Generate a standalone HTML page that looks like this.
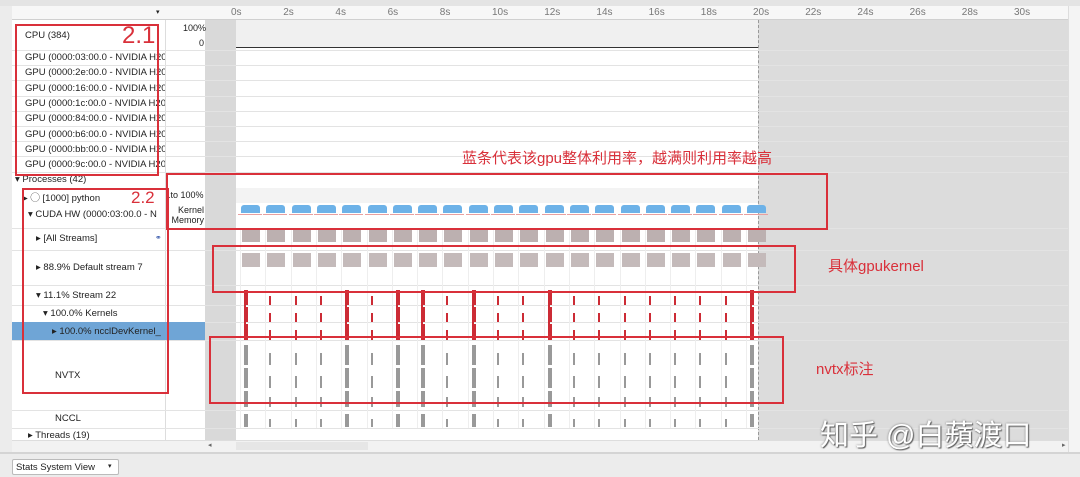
<!DOCTYPE html>
<html><head><meta charset="utf-8"><style>
*{margin:0;padding:0;box-sizing:border-box}
body{width:1080px;height:477px;overflow:hidden;background:#ececec;font-family:"Liberation Sans","Noto Sans CJK SC",sans-serif;font-size:10px;color:#222;position:relative}
.a{position:absolute}
.t{position:absolute;white-space:nowrap;font-size:9.5px}
.rb{position:absolute;border:2px solid #d9303a}
.hl{position:absolute;left:12px;width:1056px;height:1px;background:#e3e3e3}
.red{color:#d9303a;font-family:"Liberation Sans","Noto Sans CJK SC",sans-serif;position:absolute;white-space:nowrap}
</style></head><body>
<div class="a" style="left:0;top:0;width:1080px;height:6px;background:#e4e4e4"></div>
<div class="a" style="left:12px;top:6px;width:153px;height:434px;background:#fff"></div>
<div class="a" style="left:165px;top:6px;width:40px;height:434px;background:#fff;border-left:1px solid #ddd"></div>
<div class="a" style="left:205px;top:6px;width:31px;height:434px;background:#d9d9d9"></div>
<div class="a" style="left:236px;top:20px;width:522px;height:420px;background:#fff"></div>
<div class="a" style="left:236px;top:20px;width:522px;height:28px;background:#f0f0f0"></div>
<div class="a" style="left:236px;top:188px;width:522px;height:15px;background:#f3f3f3"></div>
<div class="a" style="left:758px;top:20px;width:310px;height:420px;background:#dcdcdc"></div>
<div class="a" style="left:758px;top:20px;width:0;height:420px;border-left:1px dashed #999"></div>
<div class="a" style="left:1068px;top:6px;width:12px;height:446px;background:#f4f4f4;border-left:1px solid #ddd"></div>
<div class="a" style="left:12px;top:6px;width:1056px;height:14px;background:#f7f7f7;border-bottom:1px solid #d0d0d0"></div>
<div class="t" style="left:156px;top:8px;font-size:7px">▾</div>
<div id="ticks"></div>
<div class="a" style="left:236px;top:47px;width:522px;height:1px;background:#333"></div>
<div class="hl" style="top:50px"></div><div class="hl" style="top:65px"></div><div class="hl" style="top:80px"></div><div class="hl" style="top:96px"></div><div class="hl" style="top:111px"></div><div class="hl" style="top:126px"></div><div class="hl" style="top:141px"></div><div class="hl" style="top:156px"></div><div class="hl" style="top:172px"></div><div class="hl" style="top:228px"></div><div class="hl" style="top:250px"></div><div class="hl" style="top:285px"></div><div class="hl" style="top:305px"></div><div class="hl" style="top:322px"></div><div class="hl" style="top:340px"></div><div class="hl" style="top:410px"></div><div class="hl" style="top:428px"></div>
<div class="a" style="left:12px;top:322px;width:193px;height:18px;background:#6fa5d6"></div>
<div class="t" style="left:25px;top:30px">CPU (384)</div>
<div class="t" style="left:183px;top:23px;font-size:9px">100%</div>
<div class="t" style="left:199px;top:38px;font-size:9px">0</div>
<div id="gpus"></div>
<div class="t" style="left:15px;top:174px">▾ Processes (42)</div>
<div class="t" style="left:23px;top:190px">▸ ◯ [1000] python</div>
<div class="t" style="left:168px;top:190px;font-size:9px">.to 100%</div>
<div class="t" style="left:28px;top:209px">▾ CUDA HW (0000:03:00.0 - N</div>
<div class="t" style="left:171px;top:205px;font-size:9px;text-align:right;width:33px;line-height:10px">Kernel<br>Memory</div>
<div class="t" style="left:36px;top:233px">▸ [All Streams]</div>
<div class="t" style="left:155px;top:233px;color:#3355aa;font-size:8px">⚭</div>
<div class="t" style="left:36px;top:262px">▸ 88.9% Default stream 7</div>
<div class="t" style="left:36px;top:290px">▾ 11.1% Stream 22</div>
<div class="t" style="left:43px;top:308px">▾ 100.0% Kernels</div>
<div class="t" style="left:52px;top:326px">▸ 100.0% ncclDevKernel_</div>
<div class="t" style="left:55px;top:370px">NVTX</div>
<div class="t" style="left:55px;top:413px">NCCL</div>
<div class="t" style="left:28px;top:430px">▸ Threads (19)</div>
<div id="bars"></div>
<div class="a" style="left:12px;top:440px;width:1056px;height:12px;background:#f2f2f2;border-top:1px solid #ddd"></div>
<div class="a" style="left:236px;top:442px;width:132px;height:8px;background:#e6e6e6"></div>
<div class="t" style="left:208px;top:441px;font-size:7px;color:#666">◂</div>
<div class="t" style="left:1062px;top:441px;font-size:7px;color:#666">▸</div>
<div class="a" style="left:0;top:452px;width:1080px;height:2px;background:#d4d4d4"></div>
<div class="a" style="left:12px;top:459px;width:107px;height:16px;background:#fff;border:1px solid #bbb;border-radius:2px"></div>
<div class="t" style="left:16px;top:462px">Stats System View</div>
<div class="t" style="left:108px;top:462px;font-size:7px">▾</div>
<div class="rb" style="left:15px;top:24px;width:144px;height:152px"></div>
<div class="red" style="left:122px;top:22px;font-size:24px">2.1</div>
<div class="rb" style="left:22px;top:188px;width:147px;height:206px"></div>
<div class="red" style="left:131px;top:188px;font-size:17px">2.2</div>
<div class="rb" style="left:166px;top:173px;width:662px;height:57px"></div>
<div class="red" style="left:462px;top:147px;font-size:15px">蓝条代表该gpu整体利用率，越满则利用率越高</div>
<div class="rb" style="left:212px;top:245px;width:584px;height:48px"></div>
<div class="red" style="left:828px;top:255px;font-size:15px">具体gpukernel</div>
<div class="rb" style="left:209px;top:336px;width:575px;height:68px"></div>
<div class="red" style="left:816px;top:358px;font-size:15px">nvtx标注</div>
<div class="a" style="left:820px;top:412px;font-size:29px;color:#fff;text-shadow:0 0 2px #777,1px 1px 1px #555;white-space:nowrap;font-family:'Liberation Sans','Noto Sans CJK SC',sans-serif">知乎 @白蘋渡口</div>
<script>
(function(){
var h='';
for(var i=0;i<=30;i+=2){var x=236+i*26.1;h+='<div class="t" style="left:'+(x-5)+'px;top:7px;color:#777;font-size:10px">'+i+'s</div>';}
document.getElementById('ticks').innerHTML=h;
var g=['03','2e','16','1c','84','b6','bb','9c'],s='';
for(var k=0;k<8;k++)s+='<div class="t" style="left:25px;top:'+(52+k*15.3)+'px;width:140px;overflow:hidden">GPU (0000:'+g[k]+':00.0 - NVIDIA H20</div>';
document.getElementById('gpus').innerHTML=s;
var b='';var thick={0:1,4:1,6:1,7:1,9:1,12:1,20:1};
var rows=[[290,305],[307,322],[324,340]],nv=[[345,365],[368,388],[391,407],[414,427]];
for(var j=0;j<21;j++){var x=238+j*25.3;if(x>756)break;
b+='<div class="a" style="left:'+(x+2)+'px;top:228px;width:1px;height:200px;background:#eee"></div>';
b+='<div class="a" style="left:'+(x+3)+'px;top:205px;width:19px;height:8px;background:#6db2e8;border-radius:3px 3px 0 0"></div>';
b+='<div class="a" style="left:'+(x)+'px;top:214px;width:24px;height:1px;background:#e8a0a0"></div>';
b+='<div class="a" style="left:'+(x+4)+'px;top:230px;width:18px;height:12px;background:#bcb0b0"></div>';
b+='<div class="a" style="left:'+(x+4)+'px;top:253px;width:18px;height:14px;background:#c4baba"></div>';
var w=thick[j]?4:2;
for(var r=0;r<3;r++){var t0=rows[r][0],t1=rows[r][1];var tp=thick[j]?t0:t1-(t1-t0)*0.6;
b+='<div class="a" style="left:'+(x+6)+'px;top:'+tp+'px;width:'+w+'px;height:'+(t1-tp)+'px;background:#cc2b35"></div>';}
if(thick[j])b+='<div class="a" style="left:'+(x+6)+'px;top:290px;width:2px;height:50px;background:#cc2b35"></div>';
for(var r=0;r<4;r++){var t0=nv[r][0],t1=nv[r][1];var tp=thick[j]?t0:t1-(t1-t0)*0.6;
b+='<div class="a" style="left:'+(x+6)+'px;top:'+tp+'px;width:'+w+'px;height:'+(t1-tp)+'px;background:#999"></div>';}
}
document.getElementById('bars').innerHTML=b;
})();
</script>
</body></html>
